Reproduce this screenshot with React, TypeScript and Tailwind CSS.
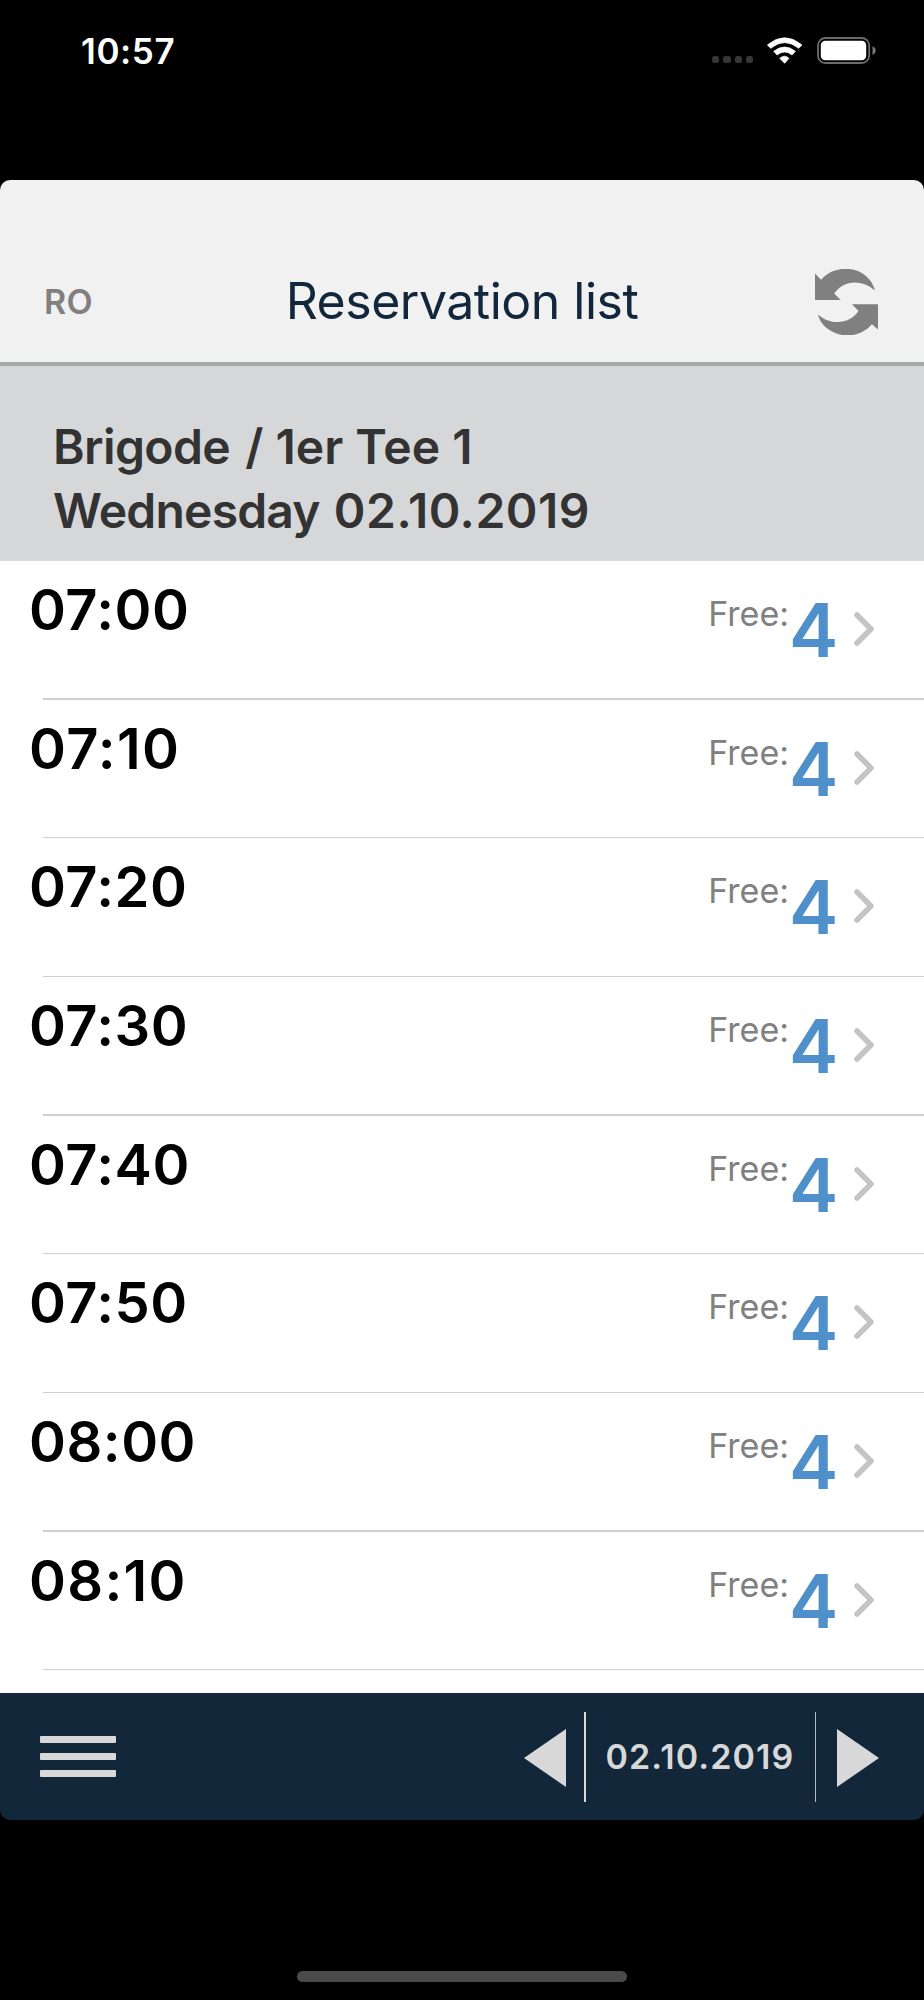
const slots = [
    {time: '07:00', free: 4},
    {time: '07:10', free: 4},
    {time: '07:20', free: 4},
    {time: '07:30', free: 4},
    {time: '07:40', free: 4},
    {time: '07:50', free: 4},
    {time: '08:00', free: 4},
    {time: '08:10', free: 4},
];

const StatusBar = () => {
    return (
        <div className="flex h-[101px] items-center justify-between pr-[48px] pl-[81px]">
            <p className="pt-px text-[35px] font-semibold tracking-[0.6px] text-white">10:57</p>
            <div className="flex items-center">
                <div className="mt-[18px] mr-[14px] flex gap-[4px]">
                    <span className="size-[7.3px] rounded-[2.5px] bg-[#363636]"/>
                    <span className="size-[7.3px] rounded-[2.5px] bg-[#363636]"/>
                    <span className="size-[7.3px] rounded-[2.5px] bg-[#363636]"/>
                    <span className="size-[7.3px] rounded-[2.5px] bg-[#363636]"/>
                </div>
                <svg className="mr-[14.3px] h-[27px] w-[35.4px]" viewBox="383 110 106 81" fill="#fff" stroke="#fff" strokeWidth="2" strokeLinejoin="round">
                    <path d="M384 134Q436 90 488 134L478 144Q436 110 394 144Z"/>
                    <path d="M403 153Q436 127 468 153L458 164Q436 146 413 164Z"/>
                    <path d="M421 174Q436 161 449 174L436 189Z"/>
                </svg>
                <svg className="h-[27px] w-[59px]" viewBox="0 0 59 27">
                    <rect x="1" y="1" width="51.2" height="25" rx="7.5" fill="none" stroke="#6b6b6b" strokeWidth="1.8"/>
                    <rect x="3.8" y="3.8" width="45.4" height="19.4" rx="4.5" fill="#fff"/>
                    <path d="M55.5 9.2Q58.7 10.5 58.7 13.5T55.5 17.9Z" fill="#777"/>
                </svg>
            </div>
        </div>
    );
};

const Header = () => {
    return (
        <header className="flex h-[186px] items-center justify-between border-b-4 border-[#a8aaaa] bg-[#f1f1f1] pt-[60px] pr-[46px] pl-[44px]">
            <p className="w-[65px] pt-px text-[34px] font-semibold tracking-[0.4px] text-[#808080]">RO</p>
            <h1 className="pt-px text-[50px] tracking-[-0.5px] text-[#12273b]">Reservation list</h1>
            <svg className="mt-px h-[66px] w-[63px]" viewBox="527 807 187 196" fill="#808080">
                <path d="M527 820L545 839C580 799 642 796 680 829Q700 848 705 871C668 838 612 838 584 880L603 899H527Z"/>
                <path d="M714 912V987L696 971C663 1009 612 1012 576 992C553 979 539 960 536 942C572 975 630 972 656 932L637 912Z"/>
            </svg>
        </header>
    );
};

const Slot = ({time, free}: { time: string, free: number }) => {
    // the "1" is a narrow glyph, so those times get looser tracking
    const tracking = time.includes('1') ? 'tracking-[1.3px]' : 'tracking-[0.5px]';

    return (
        <li className="flex h-[138.67px] shrink-0 flex-col">
            <div className="flex grow items-start justify-between pr-[49px] pl-[29px]">
                <p className={`mt-[15px] text-[56px] leading-[68px] font-semibold text-black ${tracking}`}>{time}</p>
                <div className="flex items-start">
                    <p className="mt-[33px] text-[34px] leading-[40px] text-[#808080]">Free:</p>
                    <p className="mt-[29px] w-[46px] text-[74px] leading-[80px] font-semibold text-[#4f8fca]">{free}</p>
                    <svg className="mt-[50px] ml-[18px] h-[36px] w-[22px]" viewBox="0 0 22 36" fill="none" stroke="#c4c4c6" strokeWidth="5.6" strokeLinecap="round" strokeLinejoin="round">
                        <path d="M4 4L18 18L4 32"/>
                    </svg>
                </div>
            </div>
            <div className="ml-[43px] h-[1.33px] bg-[#cfcfd1]"/>
        </li>
    );
};

const Footer = () => {
    return (
        <footer className="flex h-[127px] items-center justify-between bg-[#12273a] pr-[45px] pl-[40px]">
            <div className="flex flex-col gap-[9.5px]">
                <span className="h-[7.3px] w-[76px] rounded-[1px] bg-[#d8d8d8]"/>
                <span className="h-[7.3px] w-[76px] rounded-[1px] bg-[#d8d8d8]"/>
                <span className="h-[7.3px] w-[76px] rounded-[1px] bg-[#d8d8d8]"/>
            </div>
            <div className="flex items-center text-[#d8d8d8]">
                <svg className="mt-[3px] h-[58px] w-[42px]" viewBox="0 0 42 58" fill="currentColor">
                    <path d="M42 0V58L0 29Z"/>
                </svg>
                <span className="ml-[18px] h-[90px] w-[1.5px] bg-[#d8d8d8]"/>
                <p className="w-[229px] text-center text-[34px] font-semibold tracking-[1.1px]">02.10.2019</p>
                <span className="mr-[21.5px] h-[90px] w-[1px] bg-[#b5bac0]"/>
                <svg className="mt-[3px] h-[58px] w-[42px]" viewBox="0 0 42 58" fill="currentColor">
                    <path d="M0 0V58L42 29Z"/>
                </svg>
            </div>
        </footer>
    );
};

const App = () => {
    return (
        <div className="flex h-[2000px] w-[924px] flex-col bg-black font-['Inter',sans-serif]">
            <StatusBar/>
            <main className="mt-[79px] flex h-[1640px] shrink-0 flex-col overflow-hidden rounded-[10px]">
                <Header/>
                <div className="h-[195px] shrink-0 bg-[#d6d7d9] pt-[49px] pl-[53px] text-[48px] leading-[63.5px] font-semibold text-[#333]">
                    <p><span className="mr-[3px] tracking-[-0.6px]">Brigode</span> / 1er Tee 1</p>
                    <p><span className="mr-[2px] tracking-[-0.8px]">Wednesday</span> <span className="tracking-[0.5px]">02.10.2019</span></p>
                </div>
                <ul className="flex min-h-0 grow flex-col overflow-hidden bg-white">
                    {slots.map((slot) => (
                        <Slot key={slot.time} time={slot.time} free={slot.free}/>
                    ))}
                </ul>
                <Footer/>
            </main>
            <div className="mt-[151px] ml-[297px] h-[11px] w-[330px] rounded-full bg-[#4a4a4a]"/>
        </div>
    );
};

export default App;
